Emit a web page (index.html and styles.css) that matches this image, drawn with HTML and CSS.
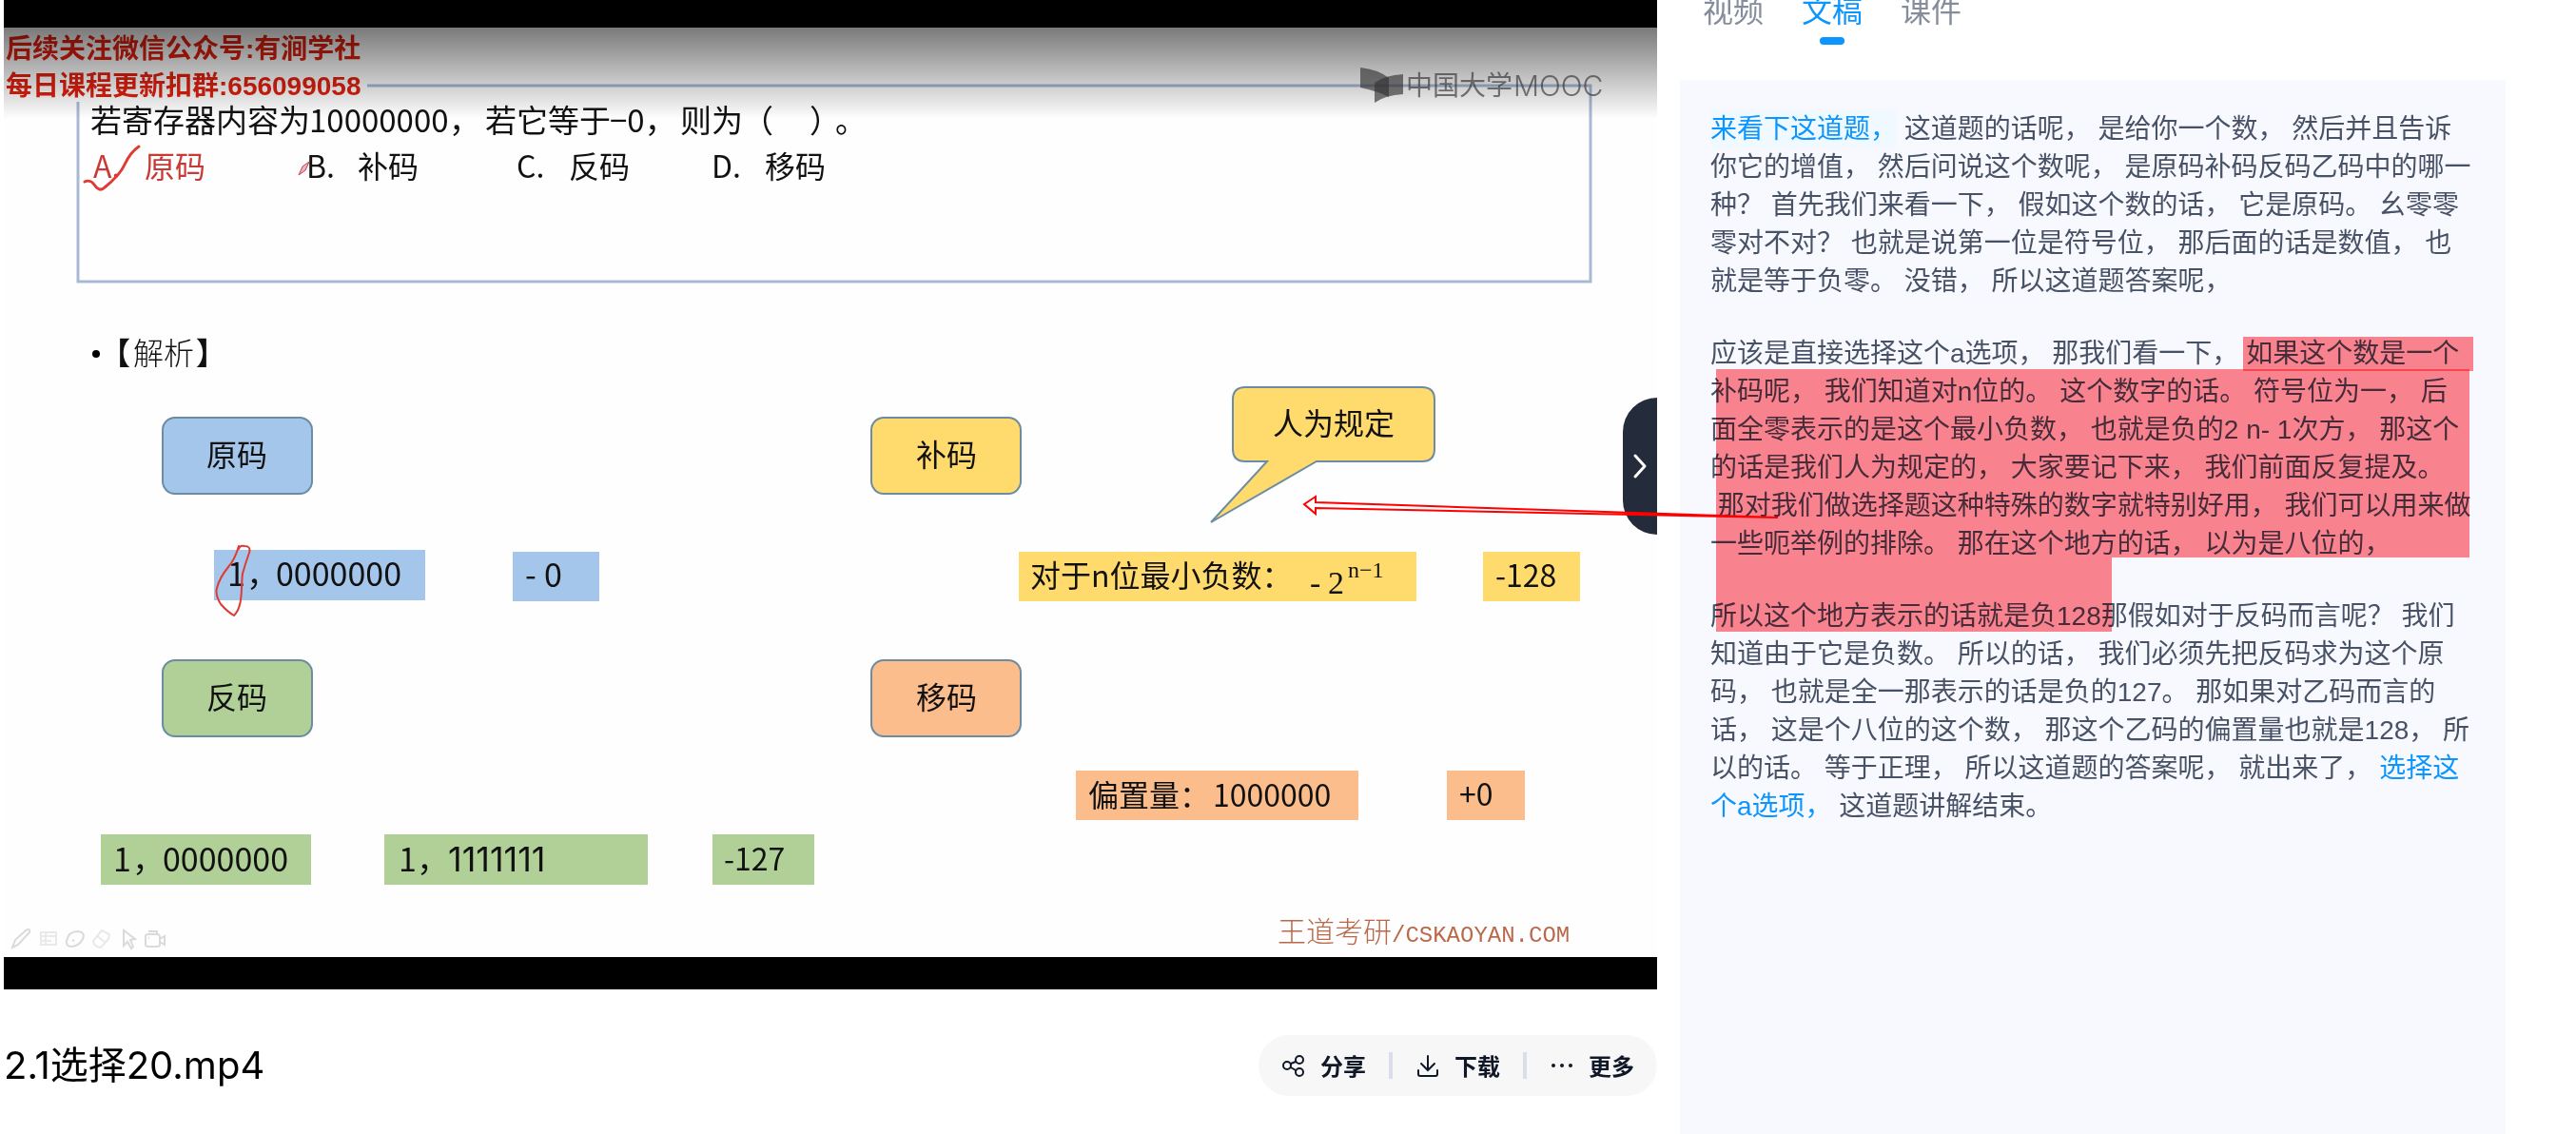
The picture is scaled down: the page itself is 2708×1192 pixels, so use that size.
FILE: index.html
```html
<!DOCTYPE html>
<html lang="zh-CN">
<head>
<meta charset="utf-8">
<title>2.1选择20.mp4</title>
<link rel="stylesheet" href="styles.css">
</head>
<body>
<main class="page">
  <section class="player">
    <div class="video">
      <svg class="frame" viewBox="4 0 1738 1040" role="img" aria-label="课程视频">
        <defs>
          <linearGradient id="shade" x1="0" y1="0" x2="0" y2="1">
            <stop offset="0" stop-color="#000" stop-opacity=".52"/>
            <stop offset="1" stop-color="#000" stop-opacity="0"/>
          </linearGradient>
        </defs>
        <rect class="letterbox" x="4" y="0" width="1738" height="1040"/>
        <rect class="slide" x="4" y="29" width="1738" height="977"/>

        <!-- question -->
        <path class="question-frame" d="M386 90H1672V296H82V107"/>
        <g class="t33">
          <text x="95" y="139">若寄存器内容为</text>
          <text x="325" y="139">10000000</text>
          <text x="472" y="139">，</text>
          <text x="510" y="139">若它等于</text>
          <text x="641" y="139">−0，</text>
          <text x="715" y="139">则为</text>
          <text x="780" y="139">（</text>
          <text x="851" y="139">）</text>
          <text x="878" y="139">。</text>
        </g>
        <g class="t32">
          <g class="answer"><text x="98" y="187">A.</text><text x="152" y="187">原码</text></g>
          <text x="322" y="187">B.</text><text x="376" y="187">补码</text>
          <text x="543" y="187">C.</text><text x="598" y="187">反码</text>
          <text x="748" y="187">D.</text><text x="804" y="187">移码</text>
        </g>
        <path class="ink" d="M89 191C93 189 97 191 99 194C102 199 106 201 110 197C120 189 127 182 131 173Q137 160 146 154"/>
        <path class="pen" d="M314 184L318 175L325 170L321 179Z"/>

        <!-- analysis -->
        <circle cx="101" cy="372" r="4"/>
        <g class="t32 heading"><text class="bracket" x="105" y="383">【</text><text x="140" y="383">解析</text><text class="bracket" x="206" y="383">】</text></g>

        <g class="node">
          <rect class="blue" x="171" y="439" width="157" height="80" rx="13"/>
          <rect class="green" x="171" y="694" width="157" height="80" rx="13"/>
          <rect class="yellow" x="916" y="439" width="157" height="80" rx="13"/>
          <rect class="orange" x="916" y="694" width="157" height="80" rx="13"/>
          <path class="yellow" d="M1309 407H1495Q1508 407 1508 420V472Q1508 485 1495 485H1384L1273 549L1332 485H1309Q1296 485 1296 472V420Q1296 407 1309 407Z"/>
        </g>
        <g class="t32 middle">
          <text x="249" y="490">原码</text>
          <text x="249" y="745">反码</text>
          <text x="995" y="490">补码</text>
          <text x="995" y="745">移码</text>
          <text x="1402" y="457">人为规定</text>
        </g>

        <rect class="blue" x="225" y="578" width="222" height="53"/>
        <rect class="blue" x="539" y="580" width="91" height="52"/>
        <rect class="yellow" x="1071" y="580" width="418" height="52"/>
        <rect class="yellow" x="1559" y="580" width="102" height="52"/>
        <rect class="green" x="106" y="877" width="221" height="53"/>
        <rect class="green" x="404" y="877" width="277" height="53"/>
        <rect class="green" x="749" y="877" width="107" height="53"/>
        <rect class="orange" x="1131" y="810" width="297" height="52"/>
        <rect class="orange" x="1521" y="810" width="82" height="52"/>

        <g class="t34">
          <text x="239" y="616">1</text><text x="259" y="616">，</text><text x="290" y="616">0000000</text>
          <text x="552" y="617">-</text><text x="572" y="617">0</text>
          <text x="119" y="916">1</text><text x="139" y="916">，</text><text x="171" y="916">0000000</text>
          <text x="419" y="916">1</text><text x="438" y="916">，</text><text class="ones" x="471" y="916">1111111</text>
        </g>
        <g class="t32">
          <text x="1083" y="617">对于n位最小负数：</text>
          <text class="math" x="1377" y="624">-</text>
          <text class="math" x="1396" y="624">2</text>
          <text class="power" x="1417" y="607">n−1</text>
          <text x="1572" y="617">-128</text>
          <text x="761" y="915">-127</text>
          <text x="1144" y="848">偏置量：</text>
          <text x="1275" y="848">1000000</text>
          <text x="1534" y="847">+0</text>
        </g>
        <path class="ink thin" d="M251 577Q252 573 257 574Q264 574 262 581Q258 592 255 603C253 618 256 637 246 647Q239 643 232 635Q226 625 228 618Q231 607 240 596Q247 588 251 574"/>

        <text class="credit" x="1343" y="990">王道考研<tspan class="credit-site">/CSKAOYAN.COM</tspan></text>

        <!-- slide-show tools -->
        <g class="tools">
          <path d="M13 996L16 988L27 978Q32 975 31 980L19 993Z"/>
          <path class="faint" d="M43 980H59V993H43ZM43 984H59M43 989H54M48 980V993"/>
          <path d="M70 989Q72 979 82 979Q90 980 87 987Q83 995 74 995Q69 994 70 989ZM76 989L78 988"/>
          <path class="faint" d="M98 989L107 978L115 982L114 987L106 996Q98 995 98 989ZM102 984L110 990"/>
          <path d="M130 978V994L134 990L138 997L140 995L137 988L142 987Z"/>
          <path d="M153 984Q153 982 156 982H165Q168 982 168 985V993Q168 995 165 995H156Q153 995 153 993ZM156 979H165V982M168 987L173 984V993L168 990M156 986H157"/>
        </g>

        <text class="notice" x="6" y="61">后续关注微信公众号:有涧学社</text>
        <text class="notice" x="6" y="100">每日课程更新扣群:<tspan class="notice-number">656099058</tspan></text>

        <rect x="4" y="29" width="1738" height="96" fill="url(#shade)"/>
        <g class="brand">
          <path d="M1430 71Q1449 73 1460 82V102Q1449 96 1430 92Z"/>
          <path d="M1445 108V87Q1456 79 1475 78V99Q1456 100 1445 108Z"/>
          <text x="1478" y="100">中国大学</text><text class="brand-latin" x="1591" y="101">MOOC</text>
        </g>
      </svg>
      <button class="fold" type="button" aria-label="收起">
        <svg viewBox="0 0 16 28"><path d="M3 3L13 14L3 25"/></svg>
      </button>
    </div>
    <div class="info">
      <h1 class="title">2.1选择20.mp4</h1>
      <div class="actions">
        <button class="action" type="button">
          <svg class="icon" viewBox="0 0 24 24"><circle cx="5" cy="12" r="4"/><circle cx="18" cy="6" r="4"/><circle cx="18" cy="19" r="4"/><path d="M9 10L14 8M9 14L14 17"/></svg>
          <span>分享</span>
        </button>
        <button class="action" type="button">
          <svg class="icon" viewBox="0 0 24 24"><path d="M12 2V17M5 10L12 17L19 10M2 17V21Q2 23 4 23H20Q22 23 22 21V17"/></svg>
          <span>下载</span>
        </button>
        <button class="action" type="button">
          <svg class="icon dots" viewBox="0 0 24 24"><circle cx="3" cy="12" r="2"/><circle cx="12" cy="12" r="2"/><circle cx="21" cy="12" r="2"/></svg>
          <span>更多</span>
        </button>
      </div>
    </div>
  </section>

  <aside class="side">
    <nav class="tabs">
      <a class="tab" href="#video">视频</a>
      <a class="tab active" href="#text">文稿</a>
      <a class="tab" href="#slides">课件</a>
    </nav>
    <article class="transcript" id="text">
      <p><a class="cue current" href="#t1">来看下这道题，</a> 这道题的话呢， 是给你一个数， 然后并且告诉你它的增值， 然后问说这个数呢， 是原码补码反码乙码中的哪一种？ 首先我们来看一下， 假如这个数的话， 它是原码。 幺零零零对不对？ 也就是说第一位是符号位， 那后面的话是数值， 也就是等于负零。 没错， 所以这道题答案呢，</p>
      <p>应该是直接选择这个a选项， 那我们看一下， 如果这个数是一个补码呢， 我们知道对n位的。 这个数字的话。 符号位为一， 后面全零表示的是这个最小负数， 也就是负的2 n- 1次方， 那这个的话是我们人为规定的， 大家要记下来， 我们前面反复提及。<br>&nbsp;那对我们做选择题这种特殊的数字就特别好用， 我们可以用来做一些呃举例的排除。 那在这个地方的话， 以为是八位的，</p>
      <p>所以这个地方表示的话就是负128那假如对于反码而言呢？ 我们知道由于它是负数。 所以的话， 我们必须先把反码求为这个原码， 也就是全一那表示的话是负的127。 那如果对乙码而言的话， 这是个八位的这个数， 那这个乙码的偏置量也就是128， 所以的话。 等于正理， 所以这道题的答案呢， 就出来了， <a class="cue" href="#t2">选择这个a选项，</a> 这道题讲解结束。</p>
      <div class="mark mark-first"></div>
      <div class="mark mark-body"></div>
      <div class="mark mark-last"></div>
      <svg class="arrow" viewBox="0 0 504 32"><path d="M503 26L17 16V22L5 12L17 4V10L503 26"/></svg>
    </article>
  </aside>
</main>
</body>
</html>
```
FILE: styles.css
```css
* { box-sizing: border-box; }

body {
  margin: 0;
  background: #fff;
  color: #000;
  font-family: "Liberation Sans", "Noto Sans CJK SC", sans-serif;
  overflow-x: hidden;
}

button { border: 0; background: none; padding: 0; font: inherit; color: inherit; cursor: pointer; }
a { text-decoration: none; color: inherit; }

.page {
  display: grid;
  grid-template-columns: minmax(0, 1738fr) minmax(0, 868fr);
  column-gap: 24px;
  min-height: 100vh;
  padding: 0 74px 0 4px;
}

/* video */
.video { position: relative; }
.frame { display: block; width: 100%; height: auto; font-family: "Noto Sans CJK SC", sans-serif; }
.letterbox { fill: #000; }
.slide { fill: #fefefe; }
.question-frame { fill: none; stroke: #a9b9d5; stroke-width: 3; }
.t32 { font-size: 32px; }
.t33 { font-size: 33px; }
.t34 { font-size: 34px; }
.t32, .t33, .t34 { font-weight: 400; fill: #111; }
.middle { text-anchor: middle; }
.answer { fill: #c93a36; }
.heading { font-weight: 300; }
.bracket { font-weight: 700; }
.ones { font-family: Inter, sans-serif; font-size: 36px; }
.blue { fill: #a4c6ea; }
.green { fill: #b0d098; }
.yellow { fill: #ffda6c; }
.orange { fill: #fbbd8b; }
.node { stroke: #6c8ca4; stroke-width: 2; }
.math { font-family: "Liberation Serif", serif; font-size: 34px; }
.power { font-family: "Liberation Serif", serif; font-size: 24px; }
.ink { fill: none; stroke: #e03a34; stroke-width: 3; stroke-linecap: round; }
.thin { stroke-width: 2; }
.pen { fill: #e8b4bd; stroke: #c8404e; stroke-width: 1; }
.credit { font-size: 30px; font-weight: 300; fill: #b9694a; }
.credit-site { font-family: "Liberation Mono", monospace; font-size: 24px; }
.tools { fill: none; stroke: #dadada; stroke-width: 2; }
.faint { stroke: #e9e9e9; }
.notice { font-family: "Liberation Sans", "Noto Sans CJK SC", sans-serif; font-size: 28px; font-weight: 700; fill: #e2200f; }
.brand { fill: #333; fill-opacity: .65; font-size: 28px; font-weight: 400; }
.brand-latin { font-family: Inter, sans-serif; font-size: 30px; font-weight: 300; }

.fold {
  position: absolute;
  right: 0;
  top: 418px;
  width: 36px;
  height: 144px;
  border-radius: 36px 0 0 36px;
  background: #242b3a;
  display: flex;
  align-items: center;
  justify-content: center;
}
.fold svg { width: 16px; height: 28px; fill: none; stroke: #fff; stroke-width: 3; stroke-linecap: round; stroke-linejoin: round; }

/* title row */
.info { display: flex; align-items: center; justify-content: space-between; margin-top: 48px; }
.title { margin: 0; font-family: Inter, "Noto Sans CJK SC", sans-serif; font-size: 40px; line-height: 64px; font-weight: 400; }
.actions { display: flex; align-items: center; height: 64px; border-radius: 32px; background: #f7f7f7; color: #101828; }
.action { display: flex; align-items: center; gap: 16px; height: 28px; padding: 0 24px 0 25px; font-size: 24px; line-height: 28px; font-weight: 700; font-family: "Noto Sans CJK SC", sans-serif; }
.action + .action { border-left: 4px solid #d9dee8; }
.icon { width: 24px; height: 24px; fill: none; stroke: #101828; stroke-width: 2; stroke-linecap: round; }
.dots { fill: #101828; stroke: none; }

/* side panel */
.side { display: flex; flex-direction: column; }
.tabs { display: flex; gap: 40px; margin-top: -10px; padding-left: 24px; height: 94px; font-size: 32px; line-height: 44px; color: #858c9b; }
.tab { display: flex; flex-direction: column; align-items: center; }
.active { color: #0a95ff; }
.active::after { content: ""; width: 26px; height: 8px; margin-top: 5px; border-radius: 4px; background: #0a95ff; }

.transcript {
  position: relative;
  flex: 1;
  padding: 32px 35px 30px 32px;
  background: #f8f9fe;
  color: #475266;
  font-size: 28px;
  line-height: 40px;
}
.transcript p { margin: 0 0 36px; }
.cue { color: #0a95ff; }
.current { padding: 4px 0; background: #f0f9ff; }

/* reader's annotations over the transcript */
.mark { position: absolute; background: #ff868f; mix-blend-mode: multiply; }
.mark-first { left: 592px; top: 270px; width: 242px; height: 36px; }
.mark-body { left: 38px; top: 304px; width: 792px; height: 198px; }
.mark-last { left: 38px; top: 502px; width: 416px; height: 78px; }
.arrow { position: absolute; left: -400px; top: 434px; width: 504px; height: 32px; fill: none; stroke: #f00; stroke-width: 2; }
```
